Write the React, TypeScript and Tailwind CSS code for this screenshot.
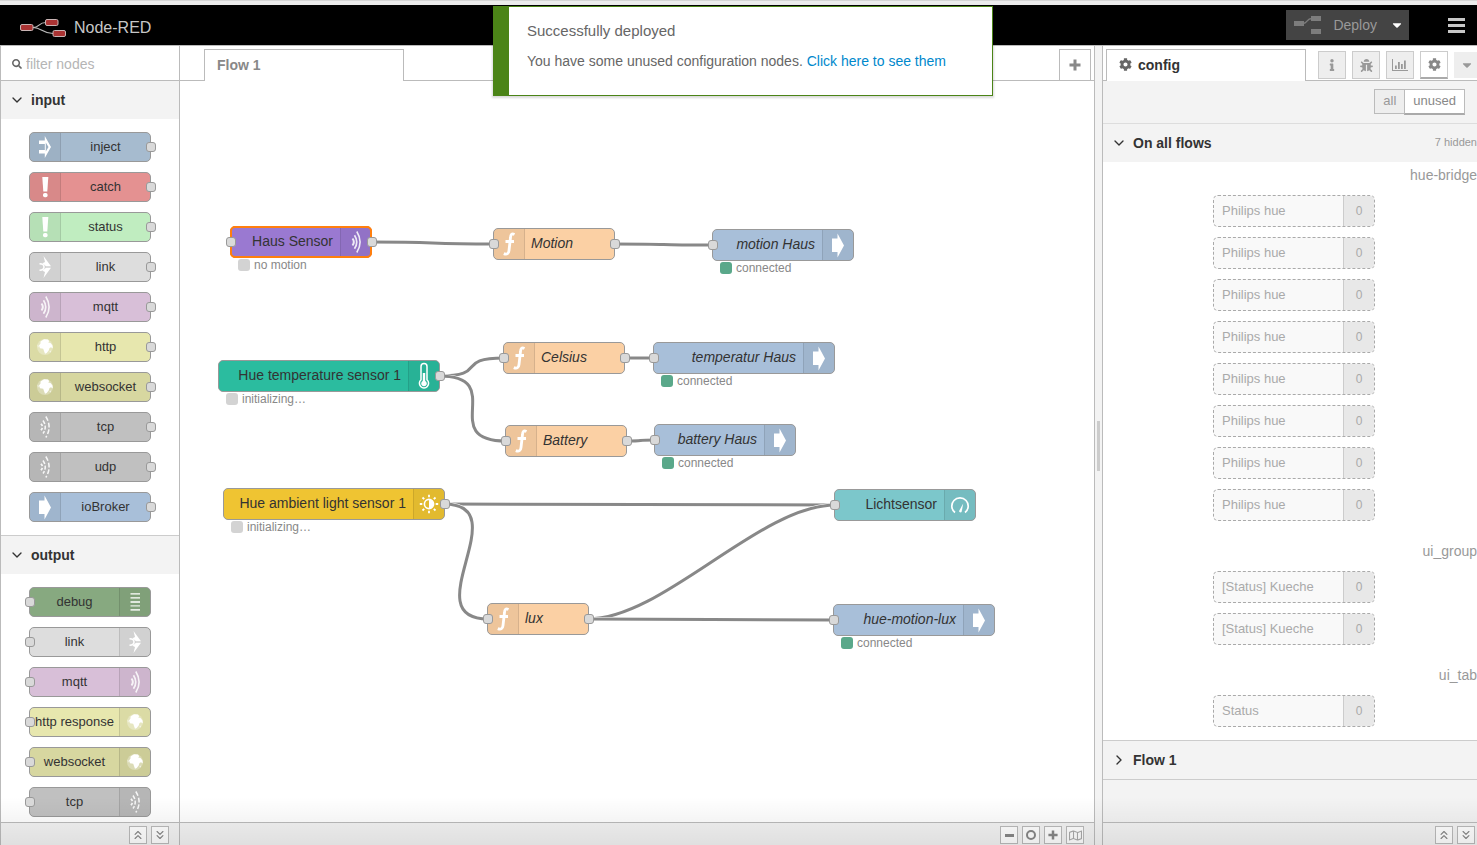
import type { ReactNode } from "react";
import clsx from "clsx";
import { ChevronDown, ChevronRight, ChevronsDown, ChevronsUp } from "lucide-react";
import { FaBug, FaCaretDown, FaCog, FaInfo, FaRegMap, FaSearch } from "react-icons/fa";

type IconName =
  | "inject"
  | "alert"
  | "link"
  | "waves"
  | "globe"
  | "bridge"
  | "arrow"
  | "debug"
  | "function"
  | "thermometer"
  | "sun"
  | "gauge";

type PaletteItem = { label: string; color: string; icon: IconName };

const INPUT_NODES: PaletteItem[] = [
  { label: "inject", color: "bg-[#a6bbcf]", icon: "inject" },
  { label: "catch", color: "bg-[#e49191]", icon: "alert" },
  { label: "status", color: "bg-[#c0edc0]", icon: "alert" },
  { label: "link", color: "bg-[#dddddd]", icon: "link" },
  { label: "mqtt", color: "bg-[#d8bfd8]", icon: "waves" },
  { label: "http", color: "bg-[#e7e7ae]", icon: "globe" },
  { label: "websocket", color: "bg-[#d7d7a0]", icon: "globe" },
  { label: "tcp", color: "bg-[#c0c0c0]", icon: "bridge" },
  { label: "udp", color: "bg-[#c0c0c0]", icon: "bridge" },
  { label: "ioBroker", color: "bg-[#a8bfd9]", icon: "arrow" },
];

const OUTPUT_NODES: PaletteItem[] = [
  { label: "debug", color: "bg-[#87a980]", icon: "debug" },
  { label: "link", color: "bg-[#dddddd]", icon: "link" },
  { label: "mqtt", color: "bg-[#d8bfd8]", icon: "waves" },
  { label: "http response", color: "bg-[#e7e7ae]", icon: "globe" },
  { label: "websocket", color: "bg-[#d7d7a0]", icon: "globe" },
  { label: "tcp", color: "bg-[#c0c0c0]", icon: "bridge" },
];

type FlowNode = {
  x: number;
  y: number;
  w: number;
  label: string;
  color: string;
  icon: IconName;
  iconSide: "left" | "right";
  input?: boolean;
  output?: boolean;
  italic?: boolean;
  selected?: boolean;
  status?: { text: string; ok?: boolean };
};

const NODE_HEIGHT = 32;

// x / y are relative to the top left corner of the canvas
const FLOW: Record<string, FlowNode> = {
  haus: { x: 50, y: 145, w: 142, label: "Haus Sensor", color: "bg-[#9a79d1]", icon: "waves", iconSide: "right", input: true, output: true, selected: true, status: { text: "no motion" } },
  motion: { x: 313, y: 147, w: 122, label: "Motion", color: "bg-[#fbd0a4]", icon: "function", iconSide: "left", input: true, output: true, italic: true },
  motionHaus: { x: 532, y: 148, w: 142, label: "motion Haus", color: "bg-[#a8bfd9]", icon: "arrow", iconSide: "right", input: true, italic: true, status: { text: "connected", ok: true } },
  temp: { x: 38, y: 279, w: 222, label: "Hue temperature sensor 1", color: "bg-[#2bbc9f]", icon: "thermometer", iconSide: "right", output: true, status: { text: "initializing…" } },
  celsius: { x: 323, y: 261, w: 122, label: "Celsius", color: "bg-[#fbd0a4]", icon: "function", iconSide: "left", input: true, output: true, italic: true },
  tempHaus: { x: 473, y: 261, w: 182, label: "temperatur Haus", color: "bg-[#a8bfd9]", icon: "arrow", iconSide: "right", input: true, italic: true, status: { text: "connected", ok: true } },
  battery: { x: 325, y: 344, w: 122, label: "Battery", color: "bg-[#fbd0a4]", icon: "function", iconSide: "left", input: true, output: true, italic: true },
  batteryHaus: { x: 474, y: 343, w: 142, label: "battery Haus", color: "bg-[#a8bfd9]", icon: "arrow", iconSide: "right", input: true, italic: true, status: { text: "connected", ok: true } },
  ambient: { x: 43, y: 407, w: 222, label: "Hue ambient light sensor 1", color: "bg-[#efc432]", icon: "sun", iconSide: "right", output: true, status: { text: "initializing…" } },
  licht: { x: 654, y: 408, w: 142, label: "Lichtsensor", color: "bg-[#7cc7cb]", icon: "gauge", iconSide: "right", input: true },
  lux: { x: 307, y: 522, w: 102, label: "lux", color: "bg-[#fbd0a4]", icon: "function", iconSide: "left", input: true, output: true, italic: true },
  motionLux: { x: 653, y: 523, w: 162, label: "hue-motion-lux", color: "bg-[#a8bfd9]", icon: "arrow", iconSide: "right", input: true, italic: true, status: { text: "connected", ok: true } },
};

const WIRES: [string, string][] = [
  ["haus", "motion"],
  ["motion", "motionHaus"],
  ["temp", "celsius"],
  ["temp", "battery"],
  ["celsius", "tempHaus"],
  ["battery", "batteryHaus"],
  ["ambient", "licht"],
  ["ambient", "lux"],
  ["lux", "licht"],
  ["lux", "motionLux"],
];

const CONFIG_GROUPS = [
  { type: "hue-bridge", items: Array.from({ length: 8 }, () => "Philips hue") },
  { type: "ui_group", items: ["[Status] Kueche", "[Status] Kueche"] },
  { type: "ui_tab", items: ["Status"] },
];

export default function App() {
  return (
    <div className="relative flex h-screen flex-col overflow-hidden bg-white font-['Liberation_Sans',Arial,sans-serif] text-sm text-[#888]">
      <div className="h-[5px] shrink-0 border-t border-[#d5d5d5] bg-[#ececec]" />
      <Header />
      <main className="relative flex min-h-0 flex-1">
        <Palette />
        <Workspace />
        <div className="flex w-[7px] shrink-0 items-center justify-center bg-[#f3f3f3]">
          <div className="h-[50px] w-[3px] bg-[#ccc]" />
        </div>
        <Sidebar />
        <div className="pointer-events-none absolute inset-x-0 bottom-0 h-12 bg-linear-to-b from-black/0 to-black/8" />
      </main>
      <Notification />
    </div>
  );
}

function Header() {
  return (
    <header className="flex h-[41px] shrink-0 items-center border-b border-[#bbb] bg-black pl-5">
      <svg className="mt-1.5" width="46" height="18" viewBox="0 0 46 18" fill="none" aria-hidden="true">
        <path d="M13 8.500C20 8.500 18 3.500 26 3.500M13 8.500C22 8.500 22 14.500 33 14.500" stroke="#bbb" strokeWidth="1.200" />
        <g fill="#a33" stroke="#c9b5b5" strokeWidth="1">
          <rect x="0.500" y="5.500" width="12.500" height="6" rx="1.500" />
          <rect x="25.500" y="0.500" width="12.500" height="6" rx="1.500" />
          <rect x="33" y="11.500" width="12.500" height="6" rx="1.500" />
        </g>
      </svg>
      <h1 className="mt-1.5 ml-2 text-base text-[#c7c7c7]">Node-RED</h1>
      <div className="ml-auto flex h-[30px] bg-[#444] text-[#999]">
        <button type="button" className="flex items-center gap-3 pl-2">
          <svg width="27" height="18" viewBox="0 0 27 18" fill="#7d7d7d" aria-hidden="true">
            <path d="M9 7.500C14 7.500 12 2.500 18 2.500" fill="none" stroke="#7d7d7d" strokeWidth="1.300" />
            <rect y="5" width="10" height="5" />
            <rect x="17" width="10" height="5" />
            <rect x="17" y="13" width="10" height="5" />
          </svg>
          Deploy
        </button>
        <button type="button" aria-label="Deploy options" className="pr-[5px] pl-[13px] text-white">
          <FaCaretDown size={14} />
        </button>
      </div>
      <button type="button" aria-label="Menu" className="mr-3 ml-[39px] flex flex-col gap-[3px]">
        <span className="h-[3px] w-[17px] bg-[#c7c7c7]" />
        <span className="h-[3px] w-[17px] bg-[#c7c7c7]" />
        <span className="h-[3px] w-[17px] bg-[#c7c7c7]" />
      </button>
    </header>
  );
}

function Notification() {
  return (
    <div className="absolute top-1.5 left-[493px] flex h-[90px] w-[500px] flex-col gap-2.5 border border-l-16 border-[#4b8417] bg-white pt-3.5 pl-[18px] leading-5 text-[#666] shadow-[0_1px_2px_1px_rgba(0,0,0,0.15)]">
      <p className="text-[15px]">Successfully deployed</p>
      <p>
        You have some unused configuration nodes.{" "}
        <a href="#config" className="text-[#0088cc]">
          Click here to see them
        </a>
      </p>
    </div>
  );
}

function Palette() {
  return (
    <aside className="flex w-[180px] shrink-0 flex-col border-x border-[#bbb]">
      <label className="flex h-[35px] shrink-0 items-center gap-1 border-b border-[#bbb] pt-0.5 pl-[11px]">
        <FaSearch size={10} className="shrink-0 text-[#666]" />
        <input
          type="text"
          aria-label="filter nodes"
          placeholder="filter nodes"
          className="w-full min-w-0 outline-none placeholder:text-[#b5b5b5]"
        />
      </label>
      <div className="min-h-0 flex-1 overflow-hidden">
        <Category title="input" items={INPUT_NODES} iconSide="left" />
        <Category title="output" items={OUTPUT_NODES} iconSide="right" />
      </div>
      <Footer>
        <FooterButton label="Collapse all categories" className="ml-auto">
          <ChevronsUp size={14} />
        </FooterButton>
        <FooterButton label="Expand all categories" className="mr-2.5">
          <ChevronsDown size={14} />
        </FooterButton>
      </Footer>
    </aside>
  );
}

function Category({ title, items, iconSide }: { title: string; items: PaletteItem[]; iconSide: "left" | "right" }) {
  return (
    <section className="border-t border-[#ccc] first:border-t-0">
      <button type="button" className="flex h-[38px] w-full items-center gap-1.5 bg-[#f3f3f3] pl-2 font-bold text-[#333]">
        <ChevronDown size={16} />
        {title}
      </button>
      <ul className="flex flex-col gap-2.5 py-[13px] pl-7">
        {items.map((item) => (
          <li
            key={item.label}
            className={clsx(
              "relative flex h-[30px] w-[122px] rounded-[5px] border border-[#999] text-[13px] text-[#333]",
              iconSide === "right" && "flex-row-reverse",
              item.color,
            )}
          >
            <IconBox icon={item.icon} side={iconSide} />
            <span className="flex flex-1 items-center justify-center whitespace-nowrap">{item.label}</span>
            <Port side={iconSide === "left" ? "right" : "left"} />
          </li>
        ))}
      </ul>
    </section>
  );
}

function IconBox({ icon, side }: { icon: IconName; side: "left" | "right" }) {
  return (
    <span
      className={clsx(
        "flex w-[31px] shrink-0 items-center justify-center border-black/10 bg-black/5",
        side === "left" ? "rounded-l-sm border-r" : "rounded-r-sm border-l",
      )}
    >
      <NodeIcon name={icon} />
    </span>
  );
}

function Port({ side }: { side: "left" | "right" }) {
  return (
    <span
      className={clsx(
        "absolute top-1/2 z-10 size-2.5 -translate-y-1/2 rounded-[3px] border border-[#999] bg-[#d9d9d9]",
        side === "left" ? "-left-[5px]" : "-right-1.5",
      )}
    />
  );
}

function Workspace() {
  return (
    <section className="flex min-w-0 flex-1 flex-col border-r border-[#bbb]">
      <div className="flex h-[35px] shrink-0 items-end">
        <div className="h-full w-6 border-b border-[#bbb]" />
        <button type="button" className="h-8 w-[200px] border-x border-t border-[#bbb] pb-0.5 pl-3 text-left font-bold text-[#888]">
          Flow 1
        </button>
        <div className="h-full flex-1 border-b border-[#bbb]" />
        <button
          type="button"
          aria-label="Add flow"
          className="flex h-8 w-8 items-center justify-center border border-[#bbb] text-[#888]"
        >
          <Plus size={12} />
        </button>
        <div className="h-full w-[3px] border-b border-[#bbb]" />
      </div>
      <div className="relative min-h-0 flex-1 overflow-hidden">
        <svg className="absolute inset-0 size-full" fill="none" aria-hidden="true">
          {WIRES.map(([from, to]) => (
            <g key={from + to}>
              <path d={wirePath(FLOW[from], FLOW[to])} stroke="#fff" strokeWidth="4" />
              <path d={wirePath(FLOW[from], FLOW[to])} stroke="#888" strokeWidth="3" />
            </g>
          ))}
        </svg>
        {Object.entries(FLOW).map(([id, node]) => (
          <CanvasNode key={id} node={node} />
        ))}
      </div>
      <Footer>
        <FooterButton label="Zoom out" className="ml-auto">
          <span className="h-[3px] w-[9px] bg-[#888]" />
        </FooterButton>
        <FooterButton label="Reset zoom">
          <span className="size-2.5 rounded-full border-2 border-[#888]" />
        </FooterButton>
        <FooterButton label="Zoom in">
          <Plus size={10} />
        </FooterButton>
        <FooterButton label="Toggle navigator" className="mr-2.5 bg-[#eee]">
          <FaRegMap size={13} className="text-[#aaa]" />
        </FooterButton>
      </Footer>
    </section>
  );
}

// Short wires get proportionally shorter control arms
function wirePath(from: FlowNode, to: FlowNode) {
  const x1 = from.x + from.w - 1;
  const y1 = from.y + NODE_HEIGHT / 2;
  const x2 = to.x + 1;
  const y2 = to.y + NODE_HEIGHT / 2;
  const arm = 75 * Math.min(1, Math.hypot(x2 - x1, y2 - y1) / 100);
  return `M${x1} ${y1}C${x1 + arm} ${y1} ${x2 - arm} ${y2} ${x2} ${y2}`;
}

function CanvasNode({ node }: { node: FlowNode }) {
  return (
    <div className="absolute" style={{ left: node.x, top: node.y, width: node.w }}>
      <div
        className={clsx(
          "relative flex h-8 rounded-[5px] border text-[#333]",
          node.selected ? "border-[#ff7f0e] outline-2 -outline-offset-2 outline-[#ff7f0e]" : "border-[#999]",
          node.iconSide === "right" && "flex-row-reverse",
          node.color,
        )}
      >
        <IconBox icon={node.icon} side={node.iconSide} />
        <span
          className={clsx(
            "flex flex-1 items-center pb-[3px] whitespace-nowrap",
            node.iconSide === "right" ? "justify-end pr-[7px]" : "pl-1.5",
            node.italic && "italic",
          )}
        >
          {node.label}
        </span>
        {node.input && <Port side="left" />}
        {node.output && <Port side="right" />}
      </div>
      {node.status && (
        <div className="flex items-center gap-1 pl-2 text-xs leading-[14px]">
          <span className={clsx("size-3 rounded-[3px]", node.status.ok ? "bg-[#5aa88a]" : "bg-[#d3d3d3]")} />
          {node.status.text}
        </div>
      )}
    </div>
  );
}

function Sidebar() {
  return (
    <aside id="config" className="flex w-[375px] shrink-0 flex-col overflow-hidden border-l border-[#bbb]">
      <div className="flex h-[35px] shrink-0 items-end">
        <div className="h-full w-[3px] shrink-0 border-b border-[#bbb]" />
        <button
          type="button"
          className="flex h-8 w-[200px] shrink-0 items-center gap-1.5 border-x border-t border-[#bbb] pb-0.5 pl-3 font-bold text-[#333]"
        >
          <FaCog size={13} className="text-[#666]" />
          config
        </button>
        <div className="flex h-full min-w-0 flex-1 items-center gap-1.5 overflow-hidden border-b border-[#bbb] pt-1 pl-3">
          <SidebarTab label="Information">
            <FaInfo size={12} />
          </SidebarTab>
          <SidebarTab label="Debug messages">
            <FaBug size={13} />
          </SidebarTab>
          <SidebarTab label="Dashboard">
            <svg width="16" height="12" viewBox="0 0 16 12" fill="#999" aria-hidden="true">
              <path d="M0 0h1v11h15v1H0zM3 6.500h1.800V10H3zM6 3h1.800v7H6zM9 5h1.800v5H9zM12 1.500h1.800V10H12z" />
            </svg>
          </SidebarTab>
          <SidebarTab label="Configuration nodes" active>
            <FaCog size={13} />
          </SidebarTab>
          <button type="button" aria-label="More tabs" className="flex h-[26px] w-[26px] shrink-0 items-center justify-center bg-[#eee]">
            <FaCaretDown size={14} className="text-[#999]" />
          </button>
        </div>
      </div>
      <div className="flex h-[43px] shrink-0 items-start justify-end border-b border-[#ddd] bg-[#f3f3f3] pt-2 pr-3 text-[13px]">
        <button type="button" className="h-[25px] border border-r-0 border-[#bbb] bg-[#eee] px-2 text-[#999]">
          all
        </button>
        <button type="button" className="h-[26px] border border-b-2 border-[#bbb] border-b-[#aaa] bg-white px-2 text-[#888]">
          unused
        </button>
      </div>
      <div className="min-h-0 flex-1 overflow-hidden bg-[#f3f3f3]">
        <button type="button" className="flex h-[38px] w-full items-center gap-1.5 pl-2 font-bold text-[#333]">
          <ChevronDown size={16} />
          On all flows
          <span className="ml-auto text-[11px] font-normal text-[#999]">7 hidden</span>
        </button>
        <div className="flex flex-col gap-[17px] bg-white pb-[13px]">
          {CONFIG_GROUPS.map((group) => (
            <div key={group.type} className="flex flex-col items-end">
              <h2 className="mb-[7px] leading-[26px] text-[#999]">{group.type}</h2>
              <ul className="mr-[102px] flex flex-col gap-2.5">
                {group.items.map((name, i) => (
                  <li
                    key={i}
                    className="flex h-8 w-[162px] items-center overflow-hidden rounded-[5px] border border-dashed border-[#aaa] bg-[#f9f9f9] text-[13px] text-[#aaa]"
                  >
                    <span className="flex-1 pl-2">{name}</span>
                    <span className="flex h-full w-[31px] items-center justify-center border-l border-[#ccc] bg-[#e8e8e8] text-xs">
                      0
                    </span>
                  </li>
                ))}
              </ul>
            </div>
          ))}
        </div>
        <button type="button" className="flex h-10 w-full items-center gap-1.5 border-y border-[#ccc] pl-2 font-bold text-[#333]">
          <ChevronRight size={16} />
          Flow 1
        </button>
      </div>
      <Footer>
        <FooterButton label="Collapse all" className="ml-auto">
          <ChevronsUp size={14} />
        </FooterButton>
        <FooterButton label="Expand all" className="mr-0.5">
          <ChevronsDown size={14} />
        </FooterButton>
      </Footer>
    </aside>
  );
}

function SidebarTab({ label, active, children }: { label: string; active?: boolean; children: ReactNode }) {
  return (
    <button
      type="button"
      aria-label={label}
      className={clsx(
        "flex size-7 shrink-0 items-center justify-center border border-[#ccc]",
        active ? "border-b-2 border-b-[#aaa] bg-white text-[#888]" : "bg-[#eee] text-[#999]",
      )}
    >
      {children}
    </button>
  );
}

function Footer({ children }: { children: ReactNode }) {
  return <div className="flex h-[23px] shrink-0 items-center gap-1 border-t border-[#bbb] bg-[#f3f3f3] pt-0.5">{children}</div>;
}

function FooterButton({ label, className, children }: { label: string; className?: string; children: ReactNode }) {
  return (
    <button
      type="button"
      aria-label={label}
      className={clsx("flex size-[18px] items-center justify-center border border-[#bbb] bg-white text-[#888]", className)}
    >
      {children}
    </button>
  );
}

function Plus({ size }: { size: number }) {
  return (
    <svg width={size} height={size} viewBox="0 0 12 12" fill="currentColor" aria-hidden="true">
      <path d="M4.500 0.500h3v4h4v3h-4v4h-3v-4h-4v-3h4z" />
    </svg>
  );
}

function NodeIcon({ name }: { name: IconName }) {
  return (
    <svg width="30" height="30" viewBox="0 0 30 30" fill="#fff" className="shrink-0" aria-hidden="true">
      {ICONS[name]}
    </svg>
  );
}

const ICONS: Record<IconName, ReactNode> = {
  inject: (
    <path
      fillRule="evenodd"
      d="M9 8.500H14.800V4L21 15l-6.200 11V21.500H9V18H14.800V12H9zM15.800 10.500v9l2.700-4.500z"
    />
  ),
  alert: (
    <>
      <path d="M12.300 5h6l-1 14.500h-4z" />
      <rect x="13" y="21" width="4.600" height="4.200" rx="1.800" />
    </>
  ),
  link: (
    <>
      <path d="M13.500 4L21 14.300H16L12.500 11.200L15 10zM13.500 26L21 15.700H16L12.500 18.800L15 20z" />
      <path d="M9.500 11.800c3.500 0 4.500 1.200 4.500 3.200s-1 3.200-4.500 3.200" fill="none" stroke="#fff" strokeWidth="1.500" />
    </>
  ),
  waves: (
    <g fill="none" stroke="#fff" opacity="0.85">
      <path d="M15.800 4.500Q22.400 15 15.800 25.500" strokeWidth="1.600" />
      <path d="M13.500 8.200Q18 15 13.500 21.800" strokeWidth="1.700" />
      <path d="M11.500 11.500Q14.200 15 11.500 18.500" strokeWidth="2" />
    </g>
  ),
  globe: (
    <>
      <circle cx="15" cy="15" r="8" opacity="0.3" />
      <path d="M10.500 9.500l3.500-2.300 4 .3 1.200 1.700-1 1.300 2.300.5 2 2.500.3 3-1.800-1.300-1.500.8-.8 2.500-2 2.500-1.700.8-1-2.800-.8-2.200-3.200-.6-1-2.600 1.500-2z" />
      <path d="M7.600 12.500l1 1.500-.6 1.800zM19.500 19.500l1.500-1-.8 2z" />
    </>
  ),
  bridge: (
    <g fill="none" stroke="#fff" strokeWidth="1.500" opacity="0.9">
      <path d="M15.800 4.500Q22.400 15 15.800 25.500" strokeDasharray="4.800 2" />
      <path d="M13 8.500Q17.500 15 13 21.500" strokeDasharray="4 1.600" />
      <path d="M11 11.800L12.500 14M11 18.200L12.500 16" strokeWidth="1.700" />
    </g>
  ),
  arrow: <path d="M9 8.500h5.500V3.500L21 15.500 14.500 27.500V22H9z" />,
  debug: (
    <>
      <path d="M10.500 6.300h9.500v1.200h-9.500zM10.500 10.200h9.500v1.400h-9.500zM10.500 14.200h9.500v1.600h-9.500z" />
      <path d="M10.500 18.200h9.500v1.400h-9.500zM10.500 22h9.500v1.800h-9.500z" opacity="0.8" />
    </>
  ),
  function: (
    <path
      d="M20.500 5.500C17.500 4 16.700 6 16.500 8.500L15 21.500C14.700 24.500 13 26 9.800 24.600M11.500 12.500h8.500"
      fill="none"
      stroke="#fff"
      strokeWidth="2.800"
    />
  ),
  thermometer: (
    <>
      <path
        d="M12 5.500a3 3 0 0 1 6 0v13.300a4.600 4.600 0 1 1-6 0z"
        fill="none"
        stroke="#fff"
        strokeWidth="1.500"
      />
      <path d="M13.800 12h2.400v8a2.800 2.800 0 1 1-2.400 0z" />
    </>
  ),
  sun: (
    <>
      <circle cx="15" cy="15" r="4.600" fill="none" stroke="#fff" strokeWidth="1.600" />
      <path d="M15 10.500a4.500 4.500 0 0 1 0 9z" />
      <path
        d="M15 5.800v2.500M15 21.700v2.500M5.800 15h2.500M21.700 15h2.500M8.500 8.500l1.700 1.700M19.800 19.800l1.700 1.700M8.500 21.500l1.700-1.700M19.800 10.200l1.700-1.700"
        stroke="#fff"
        strokeWidth="1.800"
      />
    </>
  ),
  gauge: (
    <>
      <path d="M10 22.500A8.200 8.200 0 1 1 20 22.500" fill="none" stroke="#fff" strokeWidth="1.700" />
      <path d="M18.200 13.500l-1.500 8a1.300 1.300 0 0 1-2.500-.7z" />
    </>
  ),
};
